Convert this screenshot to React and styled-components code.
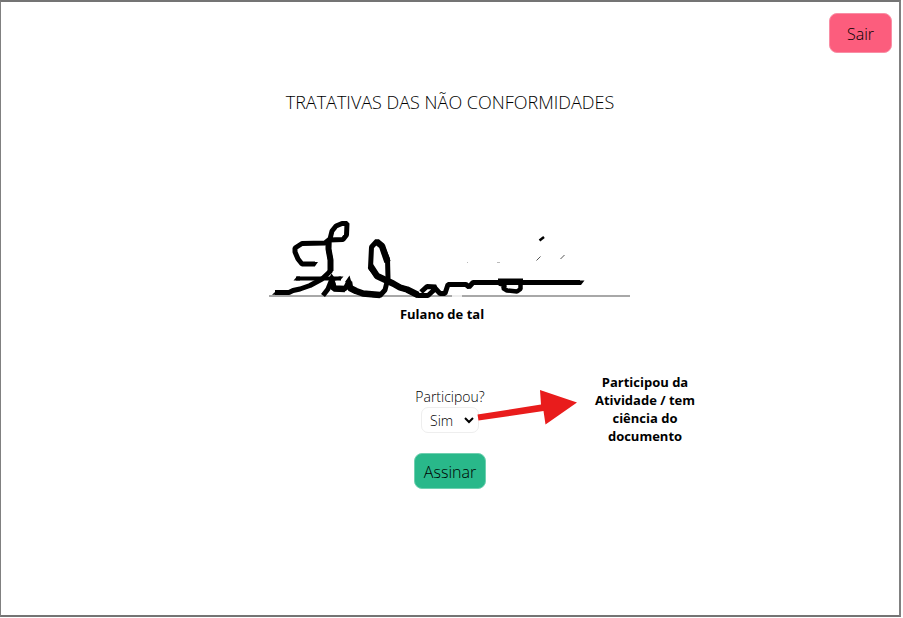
import React from "react";
import styled, { createGlobalStyle } from "styled-components";

const Global = createGlobalStyle`
  * { box-sizing: border-box; }
  body { margin: 0; background: #fff; color: #000; font-family: "Open Sans", "Noto Sans", sans-serif; font-weight: 300; }
`;

const Page = styled.main`
  display: flex;
  flex-direction: column;
  min-height: calc(100vh - 1px);
  margin-right: 2px;
  border: solid #808080;
  border-width: 2px 2px 2px 1px;
  border-top-color: #747474;
  border-bottom-color: #747474;
`;

const TopBar = styled.header`
  display: flex;
  justify-content: flex-end;
  padding: 11px 7px 0;
`;

const Button = styled.button`
  border: 1px solid ${(p) => p.$edge};
  border-radius: 8px;
  background: ${(p) => p.$fill};
  color: #000;
  font: inherit;
  font-size: 16px;
  line-height: 22px;
  padding: ${(p) => p.$pad};
`;

const Title = styled.h1`
  margin: 36px 0 0;
  text-align: center;
  font-size: 18px;
  line-height: 26px;
  font-weight: 300;
`;

const Signature = styled.figure`
  width: 364px;
  max-width: 100%;
  margin: 101px auto 0;
`;

const Ink = styled.svg`
  display: block;
  width: 100%;
`;

const Signer = styled.figcaption`
  padding: 1px 16px 0 0;
  text-align: center;
  font-size: 13px;
  line-height: 18px;
  font-weight: 700;
`;

const FormRow = styled.form`
  display: grid;
  grid-template-columns: 1fr 74px 1fr;
  margin-top: 50px;
`;

const Field = styled.div`
  grid-column: 2;
  display: flex;
  flex-direction: column;
  align-items: center;
  padding-top: 14px;
`;

const Label = styled.label`
  white-space: nowrap;
  font-size: 14px;
  line-height: 20px;
`;

const SelectBox = styled.div`
  display: grid;
  width: 58px;
  margin-bottom: 20px;
  > * { grid-area: 1 / 1; }
`;

const Select = styled.select`
  appearance: none;
  width: 100%;
  height: 26px;
  padding: 1px 8px 0;
  border: 1px solid #eee;
  border-radius: 7px;
  background: #fff;
  color: #000;
  font: inherit;
  font-size: 14px;
`;

const Chevron = styled.svg`
  align-self: center;
  justify-self: end;
  margin-right: 5px;
  pointer-events: none;
`;

const Note = styled.aside`
  display: flex;
  align-items: flex-start;
`;

const Arrow = styled.svg`
  flex: none;
  margin: 16px 10px 0 -10px;
`;

const NoteText = styled.p`
  width: 116px;
  margin: 0;
  text-align: center;
  font-size: 13px;
  line-height: 18px;
  font-weight: 700;
`;

export default function App() {
  return (
    <>
      <Global />
      <Page>
        <TopBar>
          <Button type="button" $fill="#fc5d7d" $edge="#f98ea5" $pad="9px 17px 7px">Sair</Button>
        </TopBar>
        <Title>TRATATIVAS DAS NÃO CONFORMIDADES</Title>
        <Signature>
          <Ink viewBox="268 216 364 88" role="img" aria-label="Assinatura" fill="none" stroke="#000">
            <path d="M269 296H452M462 296H630" stroke="#8c8c8c" strokeWidth="1.500" />
            <path d="M452 296H462" stroke="#ddd" />
            <g strokeWidth="5" strokeLinejoin="bevel">
              <path d="M315 264 302 264 298 259 295 252 295 248 302 243.500 325 243 330 239 332 231 336 226 342 223.500 347 223.500 346.500 235 343 239.500 329 240 328.500 249 330.500 260 330.500 271 322 279 310 285.500 300 289 293 290.500 289 292.500 275 292.500" />
              <path d="M328.500 241V249L330.500 260V271" strokeWidth="6" />
              <path d="M296 278.500H341" strokeWidth="4" />
              <path d="M323 295.500 328 289 332 279 334 288.500 345 289 349 281 350 288 356 291 363 293.500 380 295.500 385 290 388 278 387.500 259 382 246 377 241 371.500 247 370.500 268 377 276 393 283.500 400 287.500 407 289.500 418 295.500 428 295.500 434 290 436 287 427 286.500 421 292 M434 287 440 293.500 445 293.500 448 284.500 466 284.500 469 287 473 282.500 580 282.500" strokeWidth="5" />
              <path d="M332 283 334 288.500 345 289M349 282 350 288 356 291 363 293.500 380 295M387.500 262 382 246 377 242M370.500 266 377 276 393 283.500 400 287.500 407 289.500 418 295" strokeWidth="6.500" />
              <path d="M498 280.500H523" strokeWidth="4" />
              <path d="M520.500 281V289L517 291.500 507 290.500 503 288 505 285 499 283.500" strokeWidth="4.500" />
            </g>
            <g fill="#000" stroke="none">
              <path d="m272 294.700 5-4.400h5v4.400zM315 266.200l3-4.200h-5zM293.500 280.500l3.500-4h3v4zM579 285h2l3.500-4.600H579zM340 280.500l3.500-4h-5z" />
              <path d="m328 280 3.500-6.500 5 7zM345 282l4.500-6.500 2 7z" />
            </g>
            <path d="m539.500 240.500 4.500-3.500" strokeWidth="2.500" />
            <path d="m536.500 260.500 4-4M560.500 259l4-4" stroke="#555" />
            <path d="M467 262.500h1M497 262.500h3" stroke="#bbb" />
          </Ink>
          <Signer>Fulano de tal</Signer>
        </Signature>
        <FormRow onSubmit={(e) => e.preventDefault()}>
          <Field>
            <Label htmlFor="participou">Participou?</Label>
            <SelectBox>
              <Select id="participou" defaultValue="Sim">
                <option>Sim</option>
                <option>Não</option>
              </Select>
              <Chevron width="10" height="7" viewBox="0 0 10 7">
                <path d="M1 1 5 5 9 1" fill="none" stroke="#000" strokeWidth="2" />
              </Chevron>
            </SelectBox>
            <Button type="submit" $fill="#29b88a" $edge="#6fd0b0" $pad="7px 9px 5px">Assinar</Button>
          </Field>
          <Note>
            <Arrow width="100" height="36" viewBox="477 389 100 36">
              <path d="M477.500 414.500 541 404.500 540 390 577 402.500 545.500 424.500 543.500 411 478.500 420.500Z" fill="#e91c1c" />
            </Arrow>
            <NoteText>Participou da Atividade / tem ciência do documento</NoteText>
          </Note>
        </FormRow>
      </Page>
    </>
  );
}
